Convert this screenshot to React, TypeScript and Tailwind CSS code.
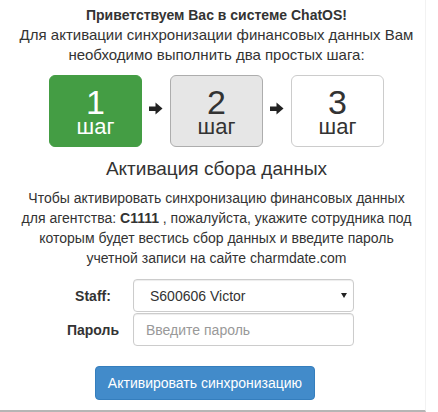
function Arrow() {
  return (
    <svg width="14" height="13" viewBox="0 0 14 13" className="mx-[7px] -mt-[6px] shrink-0">
      <rect x="0" y="4.5" width="8" height="4.5" fill="#222" />
      <path d="M6.5 0.5 L13.5 6.5 L6.5 12.5 Z" fill="#222" />
    </svg>
  );
}

function StepBox({ num, variant }: { num: string; variant: "done" | "current" | "next" }) {
  const styles = {
    done: "bg-[#449d44] border-[#449d44] text-white",
    current: "bg-[#e6e6e6] border-[#adadad] text-[#333]",
    next: "bg-white border-[#ccc] text-[#333]",
  }[variant];

  return (
    <div
      className={`w-[93px] h-[72px] rounded-[6px] border flex flex-col items-center pt-[12px] ${styles}`}
    >
      <span className="text-[34px] leading-[28px]">{num}</span>
      <span className="text-[22px] leading-[22px]">шаг</span>
    </div>
  );
}

export default function App() {
  return (
    <div
      className="w-[426px] h-[412px] bg-white border-r border-r-[#f2f2f2] border-b-2 border-b-[#b5b5b5] text-[#333] text-[14px] leading-[20px]"
      style={{ fontFamily: '"Liberation Sans", Arial, sans-serif' }}
    >
      <div className="pl-[8px] pt-[5px] text-center">
        <div className="font-bold">Приветствуем Вас в системе ChatOS!</div>
        <p className="text-[15px] leading-[20px]">
          Для активации синхронизации финансовых данных Вам
          <br />
          необходимо выполнить два простых шага:
        </p>

        <div className="mt-[10px] flex items-center justify-center">
          <StepBox num="1" variant="done" />
          <Arrow />
          <StepBox num="2" variant="current" />
          <Arrow />
          <StepBox num="3" variant="next" />
        </div>

        <h3 className="mt-[9px] text-[19px] leading-[26px]">Активация сбора данных</h3>

        <p className="mt-[6px]">
          Чтобы активировать синхронизацию финансовых данных
          <br />
          для агентства: <b>C1111</b> , пожалуйста, укажите сотрудника под
          <br />
          которым будет вестись сбор данных и введите пароль
          <br />
          учетной записи на сайте charmdate.com
        </p>
      </div>

      <div className="mt-[11px] pl-[58px] flex flex-col gap-[1px]">
        <div className="flex items-center">
          <label className="w-[70px] text-center font-bold">Staff:</label>
          <div className="ml-[5px] relative w-[221px] h-[33px]">
            <select className="appearance-none w-full h-full border border-[#ccc] rounded-[4px] pl-[16px] bg-white text-[#333] text-[14px] shadow-[inset_0_1px_1px_rgba(0,0,0,0.075)]">
              <option>S600606 Victor</option>
            </select>
            <span className="absolute right-[7px] top-[14px] w-0 h-0 border-l-[3.5px] border-r-[3.5px] border-t-[5px] border-l-transparent border-r-transparent border-t-[#222]" />
          </div>
        </div>
        <div className="flex items-center">
          <label className="w-[70px] text-center font-bold">Пароль</label>
          <input
            type="password"
            placeholder="Введите пароль"
            className="ml-[5px] w-[221px] h-[33px] border border-[#ccc] rounded-[4px] px-[12px] text-[14px] placeholder:text-[#999] shadow-[inset_0_1px_1px_rgba(0,0,0,0.075)]"
          />
        </div>
      </div>

      <button className="mt-[20px] ml-[95px] w-[220px] h-[34px] rounded-[4px] bg-[#428bca] border border-[#357ebd] text-white text-[14px]">
        Активировать синхронизацию
      </button>
    </div>
  );
}
